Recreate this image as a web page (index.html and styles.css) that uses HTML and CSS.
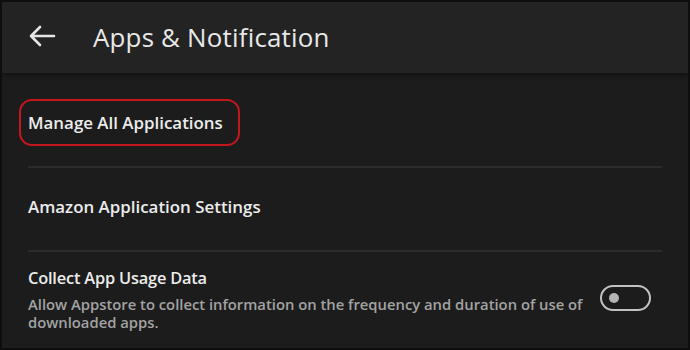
FILE: index.html
```html
<!DOCTYPE html>
<html>
<head>
<meta charset="utf-8">
<link rel="stylesheet" href="styles.css">
</head>
<body>
<div class="frame">
  <header class="bar">
    <svg class="back" width="28" height="22" viewBox="0 0 28 22"><path d="M26 11H3M12 2L3 11l9 9" fill="none" stroke="#e6e6e6" stroke-width="2.6" stroke-linecap="round" stroke-linejoin="round"/></svg>
    <h1 class="title">Apps &amp; Notification</h1>
  </header>
  <main class="list">
    <div class="row row-first">
      <span class="label highlighted">Manage All Applications</span>
    </div>
    <div class="row row-second">
      <span class="label">Amazon Application Settings</span>
    </div>
    <div class="row row-third">
      <div class="texts">
        <span class="label label-small">Collect App Usage Data</span>
        <p class="desc">Allow Appstore to collect information on the frequency and duration of use of downloaded apps.</p>
      </div>
      <span class="toggle"><span class="knob"></span></span>
    </div>
  </main>
</div>
</body>
</html>
```
FILE: styles.css
```css
html, body {
  margin: 0;
  padding: 0;
  background: #0f0f0f;
}
.frame {
  width: 690px;
  height: 350px;
  box-sizing: border-box;
  border: 2px solid #0e0e0e;
  background: #1c1c1c;
  font-family: "Open Sans", "Noto Sans", sans-serif;
  overflow: hidden;
}
.bar {
  height: 71px;
  background: #232323;
  display: flex;
  align-items: center;
  padding-left: 26px;
  box-shadow: 0 2px 5px rgba(0,0,0,0.45);
  position: relative;
}
.back {
  display: block;
  margin-top: -3px;
}
.title {
  margin: -1px 0 0 37px;
  font-size: 25.9px;
  font-weight: 400;
  color: #e8e8e8;
  letter-spacing: 0.2px;
}
.list {
  padding: 0 26px 0 26px;
}
.row {
  display: flex;
  align-items: center;
  border-bottom: 2px solid #2c2c2c;
}
.row-first {
  height: 93px;
}
.row-second {
  height: 82px;
}
.row-third {
  border-bottom: none;
  padding-top: 14px;
  align-items: flex-start;
  justify-content: space-between;
}
.label {
  font-size: 16.9px;
  font-weight: 600;
  color: #ececec;
  letter-spacing: 0;
}
.label-small {
  font-size: 16.4px;
  letter-spacing: -0.2px;
}
.highlighted {
  border: 2px solid #c4161c;
  border-radius: 13px;
  padding: 10px 15px 10px 7px;
  margin-left: -9px;
  margin-top: 6px;
}
.row-second .label {
  margin-top: -6px;
}
.texts {
  display: flex;
  flex-direction: column;
}
.desc {
  margin: 6px 0 0 0;
  width: 565px;
  font-size: 14.8px;
  line-height: 18px;
  color: #a3a3a3;
  font-weight: 600;
  letter-spacing: 0;
}
.toggle {
  flex-shrink: 0;
  width: 47px;
  height: 22px;
  border: 2px solid #c2c2c2;
  border-radius: 13px;
  display: flex;
  align-items: center;
  margin-top: 19px;
  margin-right: 11px;
}
.knob {
  width: 10px;
  height: 10px;
  border-radius: 50%;
  background: #b5b5b5;
  margin-left: 7px;
}
```
